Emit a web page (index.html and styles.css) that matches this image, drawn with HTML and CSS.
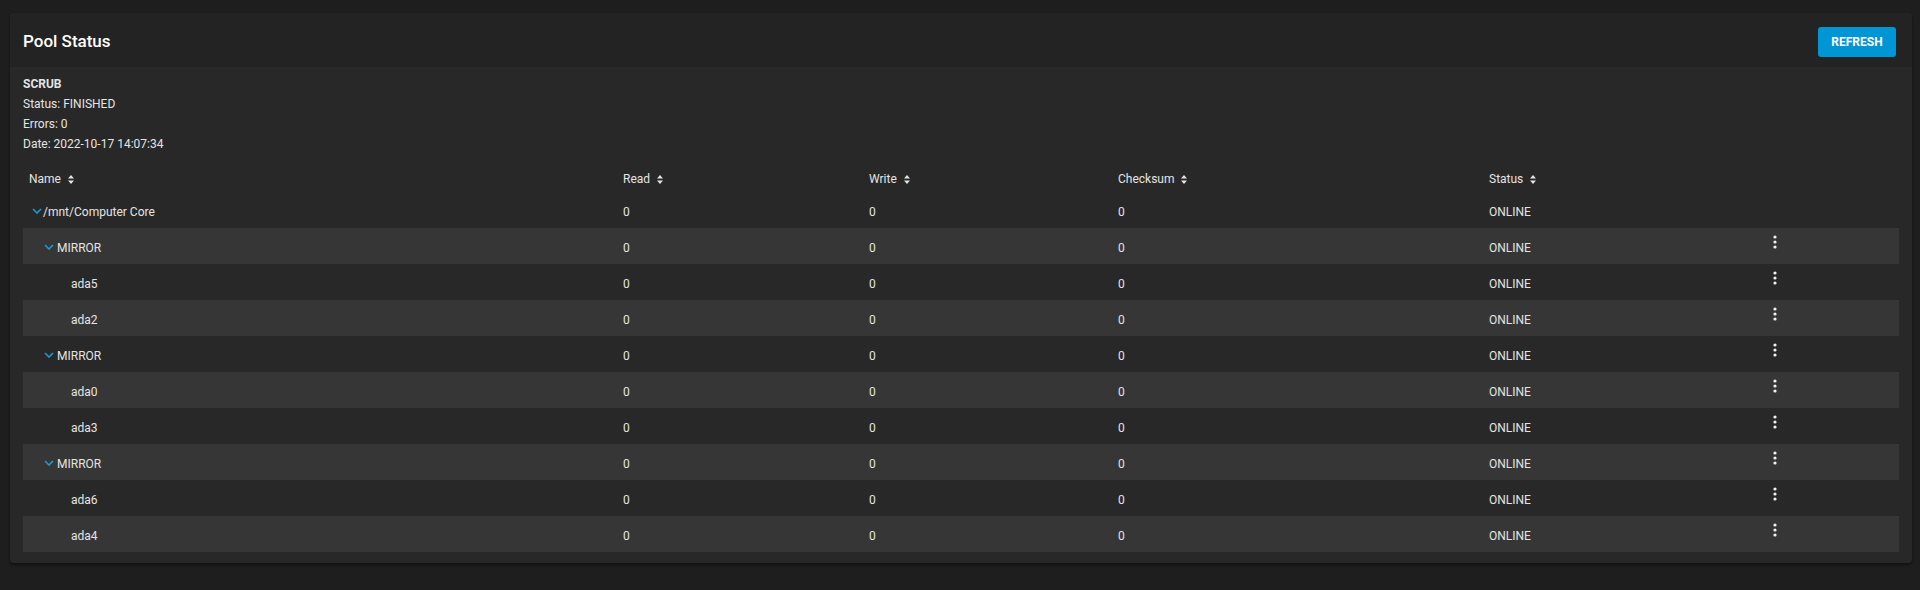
FILE: index.html
```html
<!DOCTYPE html>
<html lang="en">
<head>
<meta charset="utf-8">
<title>Pool Status</title>
<link rel="stylesheet" href="styles.css">
</head>
<body>
<section class="card">
  <header class="card-head">
    <h1 class="card-title">Pool Status</h1>
    <button class="btn-refresh" type="button">REFRESH</button>
  </header>
  <div class="card-body">
    <div class="scrub">
      <div class="scrub-title">SCRUB</div>
      <div>Status: FINISHED</div>
      <div>Errors: 0</div>
      <div>Date: 2022-10-17 14:07:34</div>
    </div>

    <div class="tree-table">
      <div class="row head">
        <div class="cell">Name <svg class="sort" viewBox="0 0 6 9"><path d="M0 3.6 3 0 6 3.6Z M0 5.4 3 9 6 5.4Z"/></svg></div>
        <div class="cell">Read <svg class="sort" viewBox="0 0 6 9"><path d="M0 3.6 3 0 6 3.6Z M0 5.4 3 9 6 5.4Z"/></svg></div>
        <div class="cell">Write <svg class="sort" viewBox="0 0 6 9"><path d="M0 3.6 3 0 6 3.6Z M0 5.4 3 9 6 5.4Z"/></svg></div>
        <div class="cell">Checksum <svg class="sort" viewBox="0 0 6 9"><path d="M0 3.6 3 0 6 3.6Z M0 5.4 3 9 6 5.4Z"/></svg></div>
        <div class="cell">Status <svg class="sort" viewBox="0 0 6 9"><path d="M0 3.6 3 0 6 3.6Z M0 5.4 3 9 6 5.4Z"/></svg></div>
        <div class="cell"></div>
        <div class="cell"></div>
      </div>

      <div class="row">
        <div class="cell name lvl0"><span class="toggle"><svg viewBox="0 0 10 6"><path d="M1 1 5 5 9 1"/></svg></span>/mnt/Computer Core</div>
        <div class="cell">0</div><div class="cell">0</div><div class="cell">0</div><div class="cell">ONLINE</div>
        <div class="cell"></div><div class="cell"></div>
      </div>

      <div class="row alt">
        <div class="cell name lvl1"><span class="toggle"><svg viewBox="0 0 10 6"><path d="M1 1 5 5 9 1"/></svg></span>MIRROR</div>
        <div class="cell">0</div><div class="cell">0</div><div class="cell">0</div><div class="cell">ONLINE</div>
        <div class="cell menu"><svg viewBox="0 0 4 14"><circle cx="2" cy="2" r="1.6"/><circle cx="2" cy="7" r="1.6"/><circle cx="2" cy="12" r="1.6"/></svg></div><div class="cell"></div>
      </div>

      <div class="row">
        <div class="cell name lvl2"><span class="toggle"></span>ada5</div>
        <div class="cell">0</div><div class="cell">0</div><div class="cell">0</div><div class="cell">ONLINE</div>
        <div class="cell menu"><svg viewBox="0 0 4 14"><circle cx="2" cy="2" r="1.6"/><circle cx="2" cy="7" r="1.6"/><circle cx="2" cy="12" r="1.6"/></svg></div><div class="cell"></div>
      </div>

      <div class="row alt">
        <div class="cell name lvl2"><span class="toggle"></span>ada2</div>
        <div class="cell">0</div><div class="cell">0</div><div class="cell">0</div><div class="cell">ONLINE</div>
        <div class="cell menu"><svg viewBox="0 0 4 14"><circle cx="2" cy="2" r="1.6"/><circle cx="2" cy="7" r="1.6"/><circle cx="2" cy="12" r="1.6"/></svg></div><div class="cell"></div>
      </div>

      <div class="row">
        <div class="cell name lvl1"><span class="toggle"><svg viewBox="0 0 10 6"><path d="M1 1 5 5 9 1"/></svg></span>MIRROR</div>
        <div class="cell">0</div><div class="cell">0</div><div class="cell">0</div><div class="cell">ONLINE</div>
        <div class="cell menu"><svg viewBox="0 0 4 14"><circle cx="2" cy="2" r="1.6"/><circle cx="2" cy="7" r="1.6"/><circle cx="2" cy="12" r="1.6"/></svg></div><div class="cell"></div>
      </div>

      <div class="row alt">
        <div class="cell name lvl2"><span class="toggle"></span>ada0</div>
        <div class="cell">0</div><div class="cell">0</div><div class="cell">0</div><div class="cell">ONLINE</div>
        <div class="cell menu"><svg viewBox="0 0 4 14"><circle cx="2" cy="2" r="1.6"/><circle cx="2" cy="7" r="1.6"/><circle cx="2" cy="12" r="1.6"/></svg></div><div class="cell"></div>
      </div>

      <div class="row">
        <div class="cell name lvl2"><span class="toggle"></span>ada3</div>
        <div class="cell">0</div><div class="cell">0</div><div class="cell">0</div><div class="cell">ONLINE</div>
        <div class="cell menu"><svg viewBox="0 0 4 14"><circle cx="2" cy="2" r="1.6"/><circle cx="2" cy="7" r="1.6"/><circle cx="2" cy="12" r="1.6"/></svg></div><div class="cell"></div>
      </div>

      <div class="row alt">
        <div class="cell name lvl1"><span class="toggle"><svg viewBox="0 0 10 6"><path d="M1 1 5 5 9 1"/></svg></span>MIRROR</div>
        <div class="cell">0</div><div class="cell">0</div><div class="cell">0</div><div class="cell">ONLINE</div>
        <div class="cell menu"><svg viewBox="0 0 4 14"><circle cx="2" cy="2" r="1.6"/><circle cx="2" cy="7" r="1.6"/><circle cx="2" cy="12" r="1.6"/></svg></div><div class="cell"></div>
      </div>

      <div class="row">
        <div class="cell name lvl2"><span class="toggle"></span>ada6</div>
        <div class="cell">0</div><div class="cell">0</div><div class="cell">0</div><div class="cell">ONLINE</div>
        <div class="cell menu"><svg viewBox="0 0 4 14"><circle cx="2" cy="2" r="1.6"/><circle cx="2" cy="7" r="1.6"/><circle cx="2" cy="12" r="1.6"/></svg></div><div class="cell"></div>
      </div>

      <div class="row alt">
        <div class="cell name lvl2"><span class="toggle"></span>ada4</div>
        <div class="cell">0</div><div class="cell">0</div><div class="cell">0</div><div class="cell">ONLINE</div>
        <div class="cell menu"><svg viewBox="0 0 4 14"><circle cx="2" cy="2" r="1.6"/><circle cx="2" cy="7" r="1.6"/><circle cx="2" cy="12" r="1.6"/></svg></div><div class="cell"></div>
      </div>
    </div>
  </div>
</section>
</body>
</html>
```

FILE: styles.css
```css
* { box-sizing: border-box; }

html, body {
  margin: 0;
  height: 100%;
}

body {
  background: #1e1e1e;
  font-family: Roboto, "Liberation Sans", Arial, sans-serif;
  font-size: 12px;
  color: #e4e4e4;
  padding: 13px 8px 0 10px;
}

/* card */
.card {
  background: #282828;
  border-radius: 4px;
  box-shadow: 0 2px 3px rgba(0, 0, 0, 0.45);
  overflow: hidden;
}

.card-head {
  height: 54px;
  background: #232323;
  display: flex;
  align-items: center;
  justify-content: space-between;
  padding: 0 16px 0 13px;
}

.card-title {
  margin: 0;
  font-size: 17px;
  font-weight: 500;
  color: #ffffff;
  padding-top: 1px;
}

.btn-refresh {
  width: 78px;
  height: 30px;
  margin-top: 3px;
  border: none;
  border-radius: 3px;
  background: #0095d5;
  color: #ffffff;
  font-family: inherit;
  font-size: 12px;
  font-weight: 700;
  letter-spacing: 0;
  padding: 0;
}

.card-body {
  padding: 7px 13px 11px 13px;
}

/* scrub summary */
.scrub {
  line-height: 20px;
}

.scrub-title {
  font-weight: 700;
}

/* tree table */
.tree-table {
  display: flex;
  flex-direction: column;
}

.row {
  display: grid;
  grid-template-columns: 594px 246px 249px 371px 280px 24px 1fr;
  height: 36px;
  align-items: center;
}

.row.alt {
  background: #363636;
}

.row.head {
  height: 38px;
  align-items: end;
  padding-bottom: 6px;
}

.cell {
  padding-left: 6px;
  display: flex;
  align-items: center;
  white-space: nowrap;
  padding-top: 4px;
}

.head .cell {
  padding-top: 0;
}

.sort {
  width: 6px;
  height: 9px;
  margin-left: 7px;
  fill: #e4e4e4;
}

.name.lvl0 { padding-left: 6px; }
.name.lvl1 { padding-left: 19px; }
.name.lvl2 { padding-left: 34px; }

.toggle {
  width: 14px;
  height: 12px;
  display: inline-flex;
  align-items: center;
  padding-left: 3px;
  margin-top: -3px;
}

.lvl1 .toggle {
  width: 15px;
  padding-left: 2px;
}

.toggle svg {
  width: 10px;
  height: 6px;
  fill: none;
  stroke: #1a9ad8;
  stroke-width: 1.6;
}

.menu {
  padding-left: 0;
  justify-content: center;
  align-self: start;
  padding-top: 7px;
}

.menu svg {
  width: 4px;
  height: 14px;
  fill: #f0f0f0;
}
```
